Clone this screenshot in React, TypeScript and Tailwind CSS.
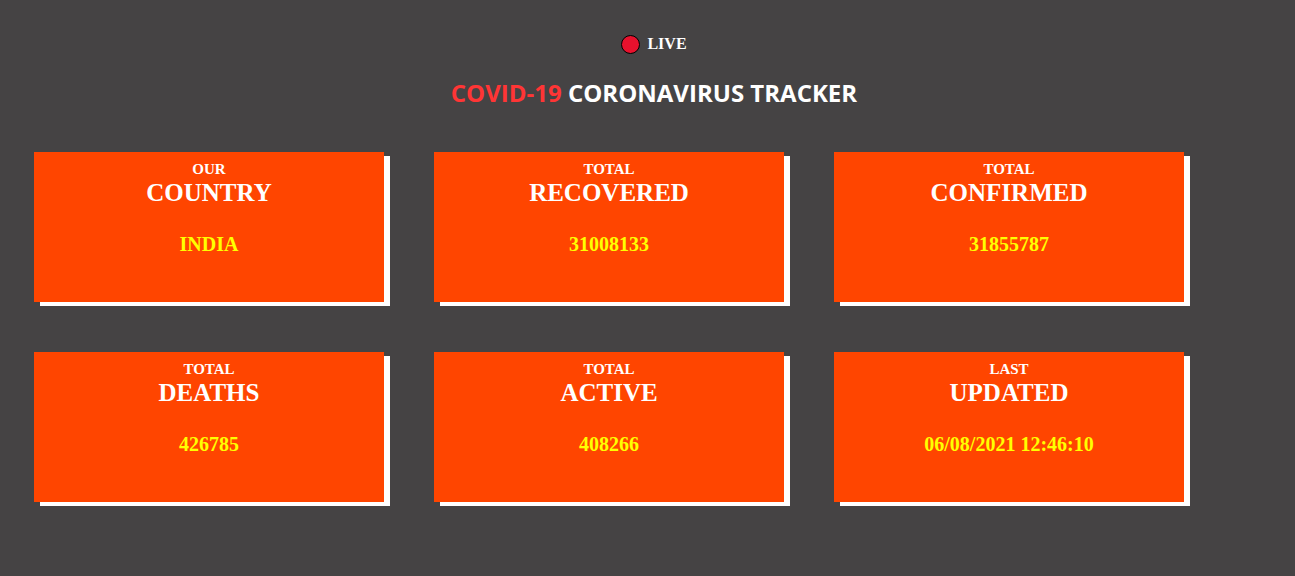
const cards = [
  { top: 'OUR', title: 'COUNTRY', value: 'INDIA' },
  { top: 'TOTAL', title: 'RECOVERED', value: '31008133' },
  { top: 'TOTAL', title: 'CONFIRMED', value: '31855787' },
  { top: 'TOTAL', title: 'DEATHS', value: '426785' },
  { top: 'TOTAL', title: 'ACTIVE', value: '408266' },
  { top: 'LAST', title: 'UPDATED', value: '06/08/2021 12:46:10' },
];

export default function App() {
  return (
    <div className="min-h-[576px] w-full bg-[#454344] font-['Liberation_Serif',serif]">
      {/* Header */}
      <div className="flex flex-col items-center pt-[34px] pl-[13px]">
        <div className="flex items-center gap-[7px]">
          <span className="block w-[19px] h-[19px] rounded-full bg-[#e8112d] border-[1.5px] border-black" />
          <span className="text-[16px] leading-[20px] font-bold text-white">LIVE</span>
        </div>
        <h1 className="mt-[24px] text-[24px] leading-[30px] font-bold text-white font-['Open_Sans',sans-serif]">
          <span className="text-[#ff3535]">COVID-19</span> CORONAVIRUS TRACKER
        </h1>
      </div>

      {/* Cards */}
      <div className="grid grid-cols-[repeat(3,350px)] gap-[50px] pl-[34px] pt-[44px]">
        {cards.map((c) => (
          <div
            key={c.title}
            className="h-[150px] bg-[#ff4500] shadow-[6px_4px_0_0_#ffffff] flex flex-col items-center pt-[8px] text-center"
          >
            <div className="text-[15px] leading-[18px] font-bold text-white">{c.top}</div>
            <div className="text-[25px] leading-[30px] font-bold text-white">{c.title}</div>
            <div className="mt-[24px] text-[20px] leading-[24px] font-bold text-[#ffff00]">{c.value}</div>
          </div>
        ))}
      </div>
    </div>
  );
}
